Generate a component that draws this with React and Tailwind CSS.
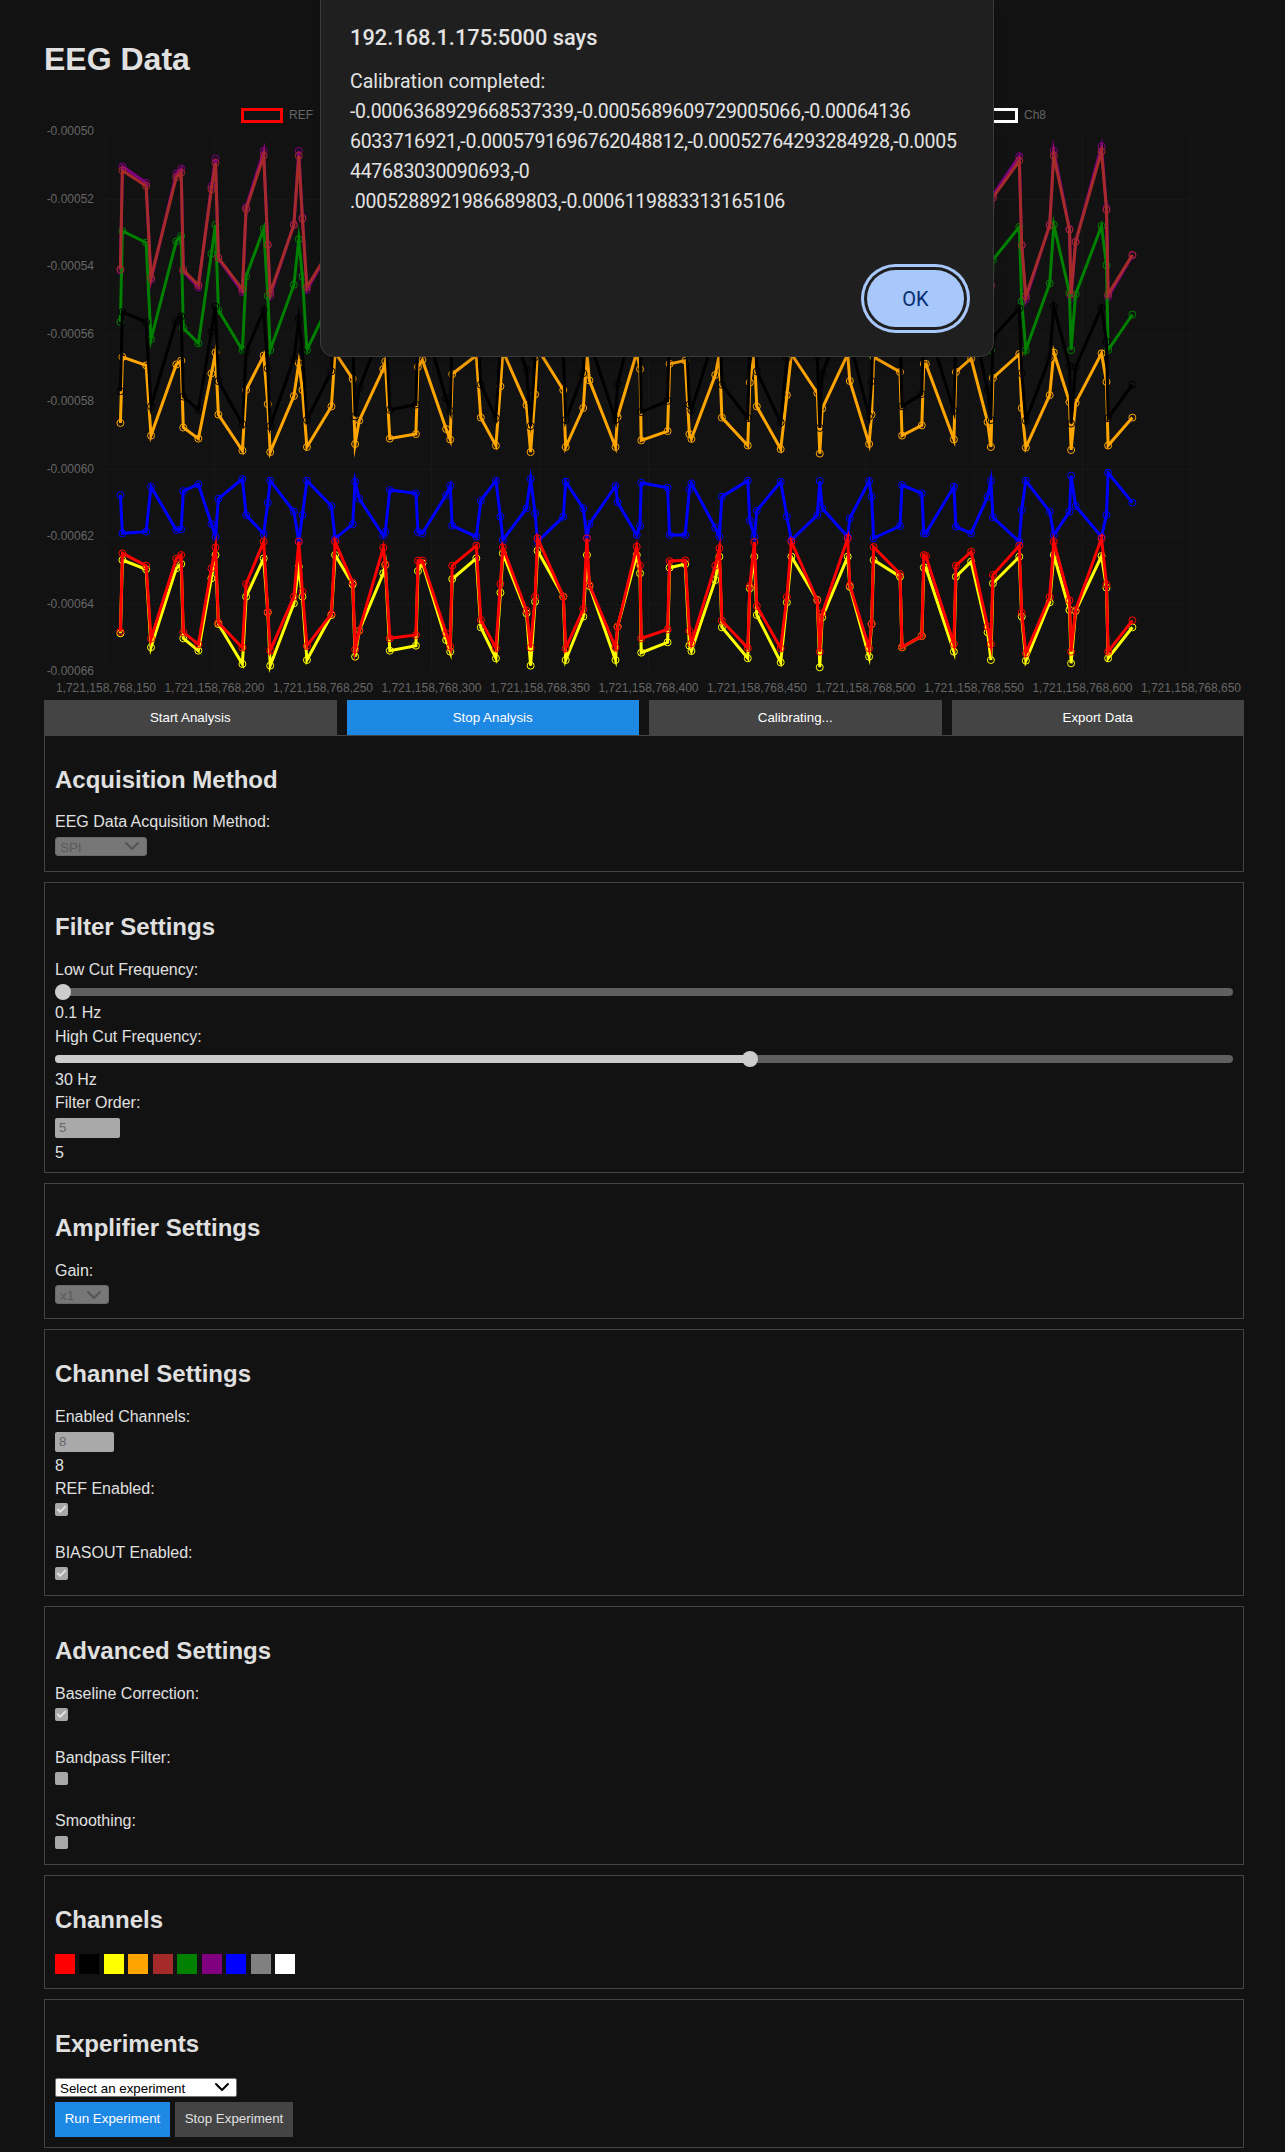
import React from 'react';
import { Check, ChevronDown } from 'lucide-react';

// [x, red, yellow, blue] read off the trace, x in 1/2.45px, y in 1/3px below y=400
const leftRows = [
  [295, 695, 700, 285], [300, 460, 480, 400], [358, 497, 508, 395], [370, 716, 742, 260], [432, 476, 505, 390],
  [444, 465, 492, 388], [449, 697, 715, 273], [486, 733, 752, 253], [518, 505, 535, 372], [528, 442, 465, 410],
  [535, 668, 672, 296], [594, 743, 792, 237], [603, 552, 590, 345], [646, 425, 475, 402], [656, 637, 637, 308],
  [662, 752, 797, 242], [720, 590, 610, 335], [732, 425, 500, 425], [741, 575, 590, 345], [752, 738, 780, 242],
  [812, 642, 645, 318], [821, 425, 465, 415], [864, 548, 553, 373], [870, 748, 770, 245], [880, 692, 692, 296],
  [939, 443, 520, 407], [944, 493, 495, 395], [955, 715, 752, 270], [1019, 705, 737, 280], [1024, 482, 513, 396],
  [1035, 482, 490, 400], [1093, 700, 720, 285], [1103, 740, 755, 257], [1108, 497, 537, 377], [1167, 437, 475, 410],
  [1178, 660, 682, 302], [1215, 745, 775, 242], [1226, 552, 578, 350], [1232, 442, 460, 420], [1290, 632, 640, 325],
  [1300, 743, 797, 237], [1311, 590, 605, 340], [1317, 415, 452, 425], [1380, 590, 590, 350], [1386, 745, 780, 245],
  [1429, 628, 650, 325], [1438, 415, 465, 415], [1444, 555, 558, 372], [1508, 742, 780, 258], [1513, 680, 680, 307],
  [1560, 440, 465, 405],
];

// same, right half: x in 1/2.431px past x=640
const rightRows = [
  [0, 497, 520, 378], [3, 715, 758, 248], [67, 688, 727, 263], [72, 483, 503, 405], [110, 481, 492, 405],
  [120, 693, 737, 268], [125, 730, 753, 250], [183, 497, 540, 383], [193, 445, 470, 410], [199, 662, 682, 290],
  [262, 744, 775, 242], [267, 558, 565, 362], [278, 426, 470, 410], [284, 618, 645, 332], [342, 745, 787, 245],
  [357, 591, 607, 350], [368, 425, 470, 420], [431, 602, 600, 345], [437, 755, 802, 243], [443, 640, 652, 325],
  [505, 415, 470, 410], [510, 556, 560, 355], [557, 745, 770, 243], [563, 672, 672, 290], [568, 441, 480, 415],
  [632, 522, 530, 378], [637, 741, 742, 255], [685, 708, 708, 280], [690, 465, 503, 400], [695, 468, 503, 400],
  [763, 732, 755, 260], [768, 497, 530, 380], [805, 455, 485, 400], [845, 680, 697, 290], [853, 733, 780, 242],
  [858, 525, 550, 352], [922, 437, 470, 425], [928, 638, 650, 330], [938, 760, 782, 242], [996, 591, 607, 335],
  [1006, 425, 465, 405], [1044, 601, 630, 335], [1048, 755, 790, 227], [1059, 630, 633, 318], [1122, 415, 468, 410],
  [1134, 554, 563, 345], [1138, 755, 775, 218], [1197, 661, 682, 308],
];

const samples = [
  ...leftRows.map(([x, r, y, b]) => ({ x: x / 2.45, red: 400 + r / 3, yellow: 400 + y / 3, blue: 400 + b / 3 })),
  ...rightRows.map(([x, r, y, b]) => ({ x: 640 + x / 2.431, red: 400 + r / 3, yellow: 400 + y / 3, blue: 400 + b / 3 })),
];

// the other channels follow the same signal at another offset and gain
const series = [
  { color: '#0000ff', y: (s) => s.blue },
  { color: '#800080', y: (s) => 166 + (s.red - 553) * 1.33 },
  { color: '#008000', y: (s) => Math.min(350, 231 + (s.yellow - 560) * 1.24) },
  { color: '#a52a2a', y: (s) => 170 + (s.red - 553) * 1.26 },
  { color: '#ffa500', y: (s) => 357 + (s.yellow - 560) * 0.9 },
  { color: '#ffff00', y: (s) => s.yellow },
  { color: '#000000', y: (s) => 312 + (s.yellow - 560) * 1.08 },
  { color: '#ff0000', y: (s) => s.red },
];

const yTicks = ['-0.00050', '-0.00052', '-0.00054', '-0.00056', '-0.00058', '-0.00060', '-0.00062', '-0.00064', '-0.00066'];
const xTicks = ['150', '200', '250', '300', '350', '400', '450', '500', '550', '600', '650'];

// the rest of the legend sits behind the dialog
const legend = [
  { label: 'REF', color: '#ff0000', x: 241 },
  { label: 'Ch8', color: '#ffffff', x: 976 },
];

const swatches = ['bg-[#ff0000]', 'bg-[#000000]', 'bg-[#ffff00]', 'bg-[#ffa500]', 'bg-[#a52a2a]', 'bg-[#008000]', 'bg-[#800080]', 'bg-[#0000ff]', 'bg-[#808080]', 'bg-[#ffffff]'];

const EegChart = () => (
  <svg width="1200" height="600" viewBox="44 100 1200 600" className="block" fontFamily="'Liberation Sans', Arial, sans-serif">
    {xTicks.map((_, i) => (
      <line key={i} x1={106 + 108.5 * i} x2={106 + 108.5 * i} y1="132" y2="677" stroke="#171717" />
    ))}
    {yTicks.map((_, i) => (
      <line key={i} x1="100" x2="1191" y1={132 + 67.5 * i} y2={132 + 67.5 * i} stroke="#171717" />
    ))}
    {yTicks.map((t, i) => (
      <text key={t} x="94" y={135 + 67.5 * i} textAnchor="end" fontSize="12" fill="#666">{t}</text>
    ))}
    {xTicks.map((t, i) => (
      <text key={t} x={106 + 108.5 * i} y="692" textAnchor="middle" fontSize="12" fill="#666">{`1,721,158,768,${t}`}</text>
    ))}
    {legend.map((l) => (
      <g key={l.label}>
        <rect x={l.x + 1.5} y="109.5" width="39" height="12" fill="none" stroke={l.color} strokeWidth="3" />
        <text x={l.x + 48} y="119" fontSize="12" fill="#666">{l.label}</text>
      </g>
    ))}
    {series.map((s) => (
      <g key={s.color} stroke={s.color} fill="none">
        <polyline
          points={samples.map((p) => `${p.x.toFixed(1)},${s.y(p).toFixed(1)}`).join(' ')}
          strokeWidth="3"
          strokeMiterlimit="10"
        />
        {samples.map((p, i) => (
          <circle key={i} cx={p.x} cy={s.y(p)} r="3.5" strokeWidth="1" />
        ))}
      </g>
    ))}
  </svg>
);

const Section = ({ title, children }) => (
  <section className="border border-[#444] p-2.5 mb-2.5 last:mb-0">
    <h2 className="mt-[19.92px] mb-[19.92px] text-2xl leading-[28px] font-bold text-[#e0e0e0]">{title}</h2>
    {children}
  </section>
);

const Label = ({ children, className = '' }) => (
  <label className={`block mb-[5px] leading-[18.4px] ${className}`}>{children}</label>
);

const Value = ({ children, className = '' }) => <div className={`leading-[18.4px] ${className}`}>{children}</div>;

const Slider = ({ value }) => (
  <div className="relative w-[1178px] h-4 flex items-center">
    <div className="w-full h-2 rounded-full bg-[#5f5f5f] overflow-hidden">
      <div className="h-full bg-[#cccccc]" style={{ width: `${value}%` }} />
    </div>
    <div className="absolute top-0 size-4 rounded-full bg-[#cccccc]" style={{ left: `calc(${value}% - ${(value / 100) * 16}px)` }} />
  </div>
);

const DisabledSelect = ({ className, children }) => (
  <div className={`relative h-[19px] ${className}`}>
    <select disabled className="block appearance-none w-full h-full pl-[4px] rounded-[3px] bg-[#777777] text-[#5a5a5a] text-[13.33px] border border-[#6a6a6a]">
      {children}
    </select>
    <ChevronDown className="absolute right-[3px] -top-[2.5px] size-6 text-[#555] pointer-events-none" strokeWidth={2} />
  </div>
);

const NumberBox = ({ value, width }) => (
  <input
    disabled
    value={value}
    readOnly
    className={`block ${width} h-5 px-1 rounded-[2px] bg-[#a9a9a9] text-[#666] text-[13.33px]`}
  />
);

const Tick = ({ checked }) => (
  <div className="size-[13px] mb-[5px] rounded-[2px] bg-[#a8a8a8] flex items-center justify-center">
    {checked && <Check className="size-[11px] text-[#e4e4e4]" strokeWidth={4} />}
  </div>
);

const Dialog = () => (
  <div className="absolute left-[320px] -top-px w-[674px] h-[358px] rounded-b-[14px] bg-[#1f1f1f] border border-[#3a3a3a] pl-[29px] pt-[24px] shadow-lg font-['Roboto',sans-serif] text-[#e3e3e3]">
    <div className="text-[21.8px] font-medium leading-[28px]">192.168.1.175:5000 says</div>
    <div className="mt-[15px] text-[19.5px] leading-[30px]">
      <div>Calibration completed:</div>
      <div className="tracking-[-0.28px]">-0.0006368929668537339,-0.0005689609729005066,-0.00064136</div>
      <div className="tracking-[-0.28px]">6033716921,-0.0005791696762048812,-0.00052764293284928,-0.0005</div>
      <div className="tracking-[-0.28px]">447683030090693,-0</div>
      <div className="tracking-[-0.28px]">.0005288921986689803,-0.0006119883313165106</div>
    </div>
    <button className="absolute left-[546px] top-[270px] w-[97px] h-[57px] rounded-full bg-[#a8c7fa] text-[#062e6f] text-[20px] shadow-[0_0_0_3px_#1f1f1f,0_0_0_6px_#a8c7fa]">
      OK
    </button>
  </div>
);

export default function App() {
  return (
    <div className="relative min-h-screen bg-[#121212] text-[#e0e0e0] font-['Liberation_Sans',Arial,sans-serif] pl-[44px] pt-[41.44px] pb-1">
      <div className="w-[1200px]">
        <h1 className="mb-[21.44px] text-[32px] leading-[36.8px] font-bold">EEG Data</h1>
        <EegChart />
        <div className="flex gap-2.5">
          <button className="flex-1 h-[35px] pt-px bg-[#444444] text-white text-[13.33px]">Start Analysis</button>
          <button className="flex-1 h-[35px] pt-px bg-[#1e88e5] text-white text-[13.33px]">Stop Analysis</button>
          <button className="flex-1 h-[35px] pt-px bg-[#444444] text-white text-[13.33px]">Calibrating...</button>
          <button className="flex-1 h-[35px] pt-px bg-[#444444] text-white text-[13.33px]">Export Data</button>
        </div>

        <Section title="Acquisition Method">
          <Label>EEG Data Acquisition Method:</Label>
          <DisabledSelect className="w-[92px] mb-[5px]"><option>SPI</option></DisabledSelect>
        </Section>

        <Section title="Filter Settings">
          <Label>Low Cut Frequency:</Label>
          <Slider value={0} />
          <Value className="mt-1">0.1 Hz</Value>
          <Label className="mt-[5px]">High Cut Frequency:</Label>
          <Slider value={59.12} />
          <Value className="mt-1">30 Hz</Value>
          <Label className="mt-[5px]">Filter Order:</Label>
          <NumberBox value="5" width="w-[65px]" />
          <Value className="mt-[6px]">5</Value>
        </Section>

        <Section title="Amplifier Settings">
          <Label>Gain:</Label>
          <DisabledSelect className="w-[54px] mb-[4px]"><option>x1</option></DisabledSelect>
        </Section>

        <Section title="Channel Settings">
          <Label>Enabled Channels:</Label>
          <NumberBox value="8" width="w-[59px]" />
          <Value className="mt-[5px]">8</Value>
          <Label className="mt-[5px]">REF Enabled:</Label>
          <Tick checked />
          <Label className="mt-[27.3px]">BIASOUT Enabled:</Label>
          <Tick checked />
        </Section>

        <Section title="Advanced Settings">
          <Label>Baseline Correction:</Label>
          <Tick checked />
          <Label className="mt-[27.3px]">Bandpass Filter:</Label>
          <Tick />
          <Label className="mt-[27.3px]">Smoothing:</Label>
          <Tick />
        </Section>

        <Section title="Channels">
          <div className="flex gap-[4.44px] mb-[4.6px]">
            {swatches.map((c) => (
              <div key={c} className={`size-5 ${c}`} />
            ))}
          </div>
        </Section>

        <Section title="Experiments">
          <div className="relative w-[182px] h-[19px] mb-[5px]">
            <select className="block appearance-none w-full h-full pl-[4px] bg-white text-black text-[13.33px] border border-[#767676] rounded-[2px]">
              <option>Select an experiment</option>
            </select>
            <ChevronDown className="absolute right-[3px] -top-[2.5px] size-6 text-black pointer-events-none" strokeWidth={2} />
          </div>
          <div className="flex gap-[5px]">
            <button className="w-[115px] h-[35px] bg-[#1e88e5] text-white text-[13.33px]">Run Experiment</button>
            <button className="w-[118px] h-[35px] bg-[#444444] text-[#e0e0e0] text-[13.33px]">Stop Experiment</button>
          </div>
        </Section>
      </div>
      <Dialog />
    </div>
  );
}
